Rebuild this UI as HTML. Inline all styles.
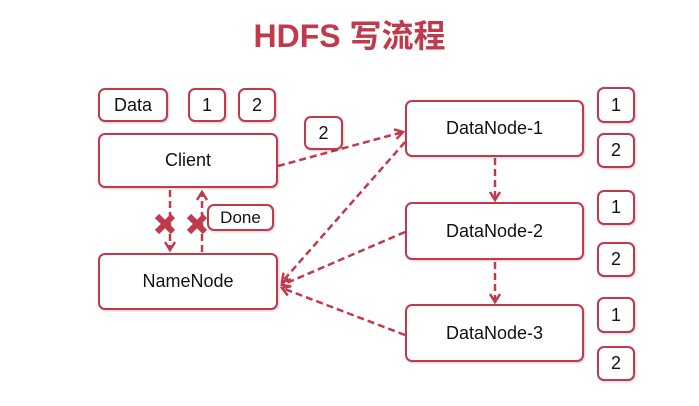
<!DOCTYPE html>
<html><head><style>
body{margin:0;width:699px;height:406px;background:#fff;position:relative;overflow:hidden;font-family:"Liberation Sans","Noto Sans CJK SC",sans-serif;}
.b{position:absolute;border:2px solid #c13a4c;border-radius:7px;box-sizing:border-box;display:flex;align-items:center;justify-content:center;font-size:18px;color:#111;background:#fff;box-shadow:1px 1px 2px rgba(0,0,0,.2);}
h1{position:absolute;top:11px;left:0;width:699px;text-align:center;margin:0;font-size:32px;color:#c13a4c;font-weight:bold;}
</style></head><body>
<h1>HDFS 写流程</h1>
<svg width="699" height="406" style="position:absolute;left:0;top:0">
<defs><marker id="a" markerWidth="12" markerHeight="12" refX="9" refY="6" orient="auto" markerUnits="userSpaceOnUse"><path d="M1,1 L9,6 L1,11" fill="none" stroke="#c13a4c" stroke-width="2.5"/></marker></defs>
<g stroke="#c13a4c" stroke-width="2.5" stroke-dasharray="7,4" fill="none" marker-end="url(#a)">
<line x1="278" y1="166" x2="403" y2="132"/>
<line x1="405" y1="142" x2="282" y2="282"/>
<line x1="405" y1="232" x2="282" y2="285"/>
<line x1="405" y1="335" x2="282" y2="288"/>
<line x1="170" y1="190" x2="170" y2="250"/>
<line x1="202" y1="252" x2="202" y2="192"/>
<line x1="495" y1="158" x2="495" y2="200"/>
<line x1="495" y1="262" x2="495" y2="302"/>
</g>
<g stroke="#c13a4c" stroke-width="6">
<line x1="157" y1="216" x2="173" y2="232"/><line x1="173" y1="216" x2="157" y2="232"/>
<line x1="189" y1="216" x2="205" y2="232"/><line x1="205" y1="216" x2="189" y2="232"/>
</g>
</svg>
<div class="b" style="left:98px;top:88px;width:70px;height:34px">Data</div>
<div class="b" style="left:188px;top:88px;width:38px;height:34px">1</div>
<div class="b" style="left:238px;top:88px;width:38px;height:34px">2</div>
<div class="b" style="left:98px;top:133px;width:180px;height:55px">Client</div>
<div class="b" style="left:304px;top:116px;width:39px;height:34px">2</div>
<div class="b" style="left:207px;top:204px;width:67px;height:27px;font-size:17px">Done</div>
<div class="b" style="left:98px;top:253px;width:180px;height:57px">NameNode</div>
<div class="b" style="left:405px;top:100px;width:179px;height:57px">DataNode-1</div>
<div class="b" style="left:405px;top:202px;width:179px;height:58px">DataNode-2</div>
<div class="b" style="left:405px;top:304px;width:179px;height:58px">DataNode-3</div>
<div class="b" style="left:597px;top:87px;width:38px;height:36px">1</div>
<div class="b" style="left:597px;top:133px;width:38px;height:35px">2</div>
<div class="b" style="left:597px;top:190px;width:38px;height:35px">1</div>
<div class="b" style="left:597px;top:242px;width:38px;height:35px">2</div>
<div class="b" style="left:597px;top:297px;width:38px;height:36px">1</div>
<div class="b" style="left:597px;top:346px;width:38px;height:35px">2</div>
</body></html>
